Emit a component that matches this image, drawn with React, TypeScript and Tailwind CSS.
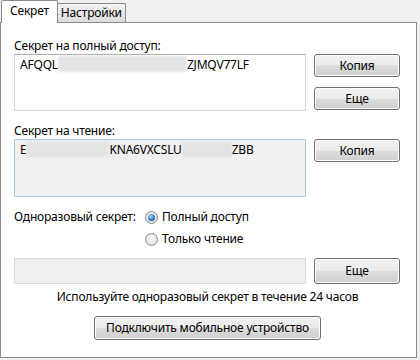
import React from "react";

const btn =
  "flex items-center justify-center rounded-[3px] border border-[#707070] bg-[linear-gradient(to_bottom,#f2f2f2_0%,#ebebeb_50%,#dddddd_50%,#cfcfcf_100%)] shadow-[inset_0_0_0_1px_#fcfcfc] text-[12px] text-black";

function Blur({ w }: { w: number }) {
  return (
    <span
      className="inline-block h-[16px] align-middle bg-[#e4e4e4] blur-[1px] rounded-[2px]"
      style={{ width: w }}
    />
  );
}

function Radio({ checked }: { checked?: boolean }) {
  return (
    <span className="w-[13px] h-[13px] rounded-full border border-[#8e8f8f] bg-[radial-gradient(circle_at_50%_40%,#ffffff,#d4d4d4)] flex items-center justify-center">
      {checked && (
        <span className="w-[7px] h-[7px] rounded-full bg-[radial-gradient(circle_at_40%_35%,#9ee0ff,#1d5fa6_70%,#0d3b72)]" />
      )}
    </span>
  );
}

export default function App() {
  return (
    <div
      className="w-[420px] h-[360px] bg-[#f0f0f0] text-[12px] text-black leading-[16px] tracking-[-0.2px]"
      style={{ fontFamily: '"Noto Sans", "Open Sans", sans-serif' }}
    >
      <div className="flex items-end h-[22px] pl-[1px]">
        <div className="relative z-10 h-[23px] -mb-px px-[8px] pt-[2px] bg-white border border-b-0 border-[#898c95] rounded-t-[2px]">
          Секрет
        </div>
        <div className="h-[19px] px-[3px] pt-[1px] -ml-px border border-b-0 border-[#898c95] bg-[linear-gradient(to_bottom,#f3f3f3,#dcdcdc)] rounded-t-[2px]">
          Настройки
        </div>
      </div>
      <div className="w-[417px] h-[336px] bg-white border border-[#898c95] px-[13px] pt-[15px]">
        <div>Секрет на полный доступ:</div>
        <div className="flex gap-[8px]">
          <div className="w-[292px] h-[57px] border border-[#d5d5d5] border-t-[#abadb3] px-[5px] pt-[1px] leading-[16px] whitespace-nowrap flex items-start">
            <span className="mt-[1px]">AFQQL</span>
            <Blur w={129} />
            <span className="mt-[1px]">ZJMQV77LF</span>
          </div>
          <div className="flex flex-col gap-[10px]">
            <div className={btn + " w-[86px] h-[23px]"}>Копия</div>
            <div className={btn + " w-[86px] h-[23px]"}>Еще</div>
          </div>
        </div>
        <div className="mt-[12px]">Секрет на чтение:</div>
        <div className="flex gap-[8px]">
          <div className="w-[292px] h-[58px] border border-[#a9c7e4] bg-[#f0f0f0] px-[5px] pt-[1px] whitespace-nowrap flex items-start">
            <span className="mt-[1px]">E</span>
            <Blur w={83} />
            <span className="mt-[1px]">KNA6VXCSLU</span>
            <Blur w={50} />
            <span className="mt-[1px]">ZBB</span>
          </div>
          <div>
            <div className={btn + " w-[86px] h-[23px]"}>Копия</div>
          </div>
        </div>
        <div className="mt-[12px] flex">
          <div className="w-[131px]">Одноразовый секрет:</div>
          <div className="flex flex-col gap-[6px]">
            <div className="flex items-center gap-[4px]">
              <Radio checked />
              <span>Полный доступ</span>
            </div>
            <div className="flex items-center gap-[4px]">
              <Radio />
              <span>Только чтение</span>
            </div>
          </div>
        </div>
        <div className="mt-[11px] flex gap-[8px]">
          <div className="w-[292px] h-[26px] border border-[#dcdcdc] bg-[#f0f0f0]" />
          <div className={btn + " w-[86px] h-[26px]"}>Еще</div>
        </div>
        <div className="mt-[5px] text-center pr-[2px]">
          Используйте одноразовый секрет в течение 24 часов
        </div>
        <div className="mt-[11px] flex justify-center pr-[2px]">
          <div className={btn + " w-[227px] h-[24px]"}>
            Подключить мобильное устройство
          </div>
        </div>
      </div>
    </div>
  );
}
